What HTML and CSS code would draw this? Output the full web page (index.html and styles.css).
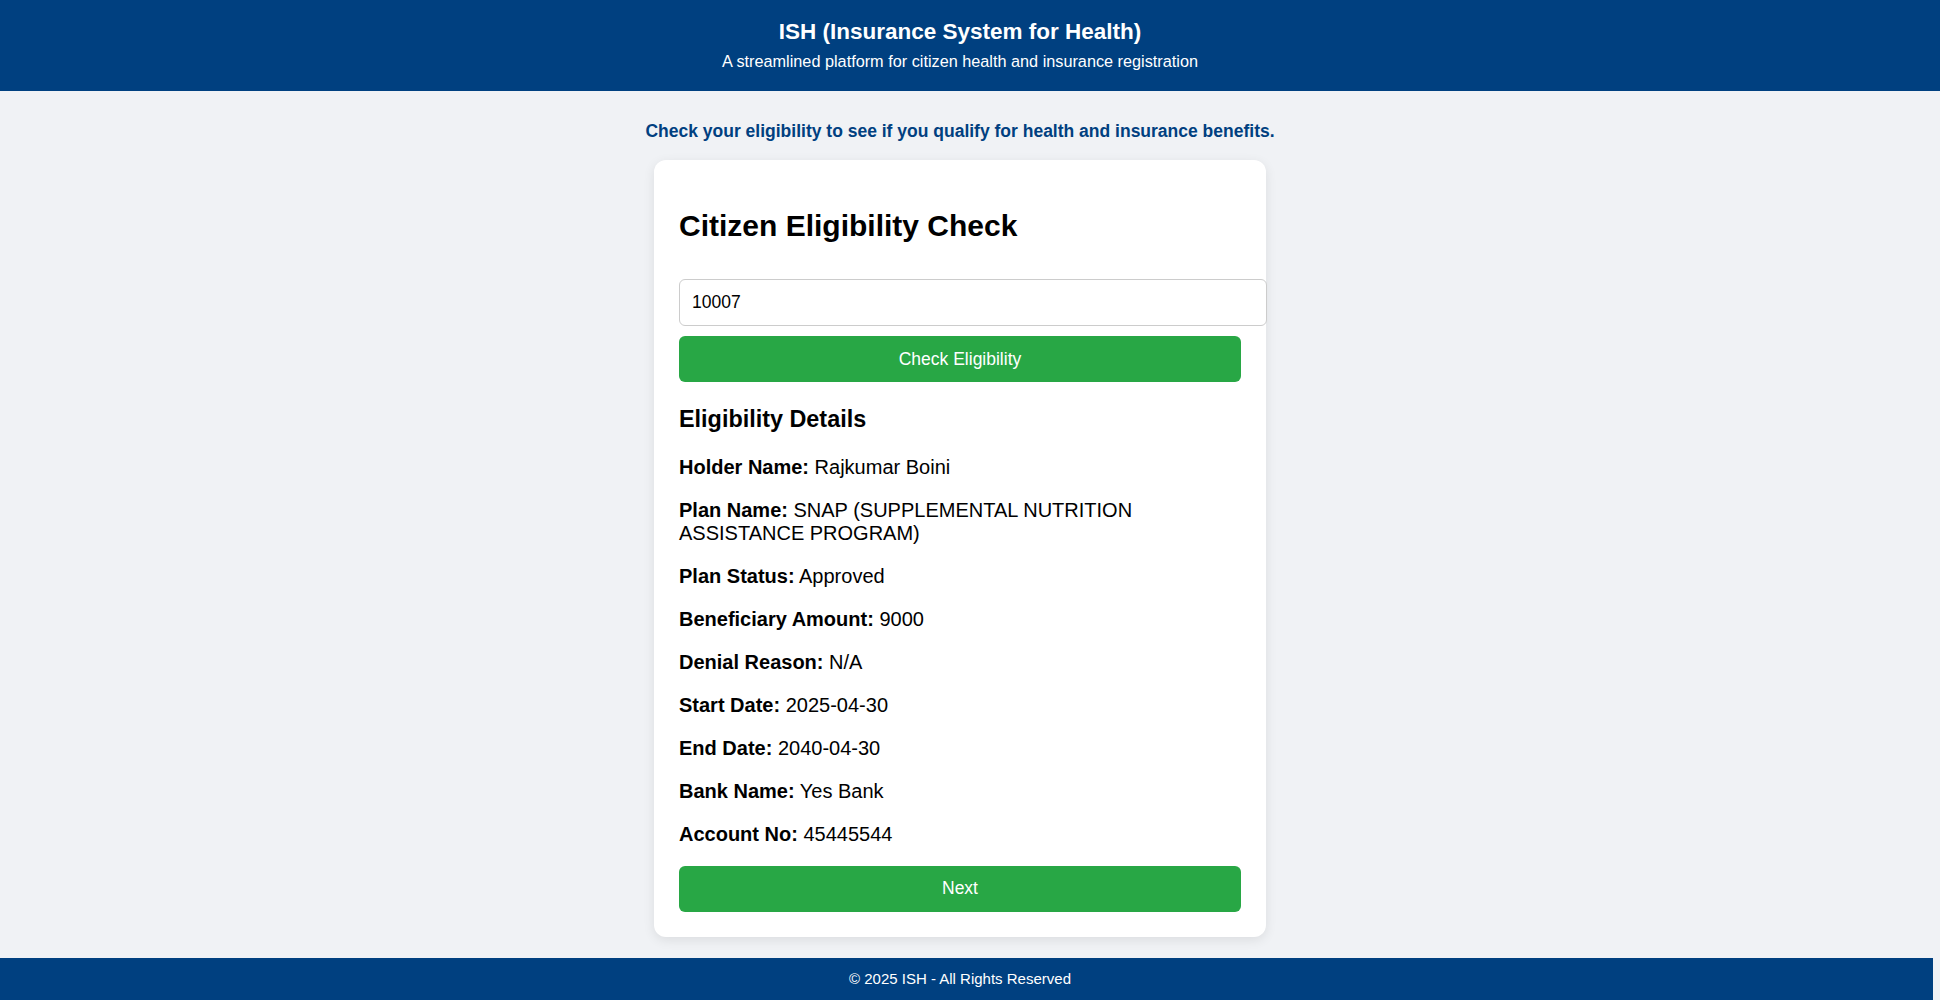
FILE: index.html
```html
<!DOCTYPE html>
<html lang="en">
<head>
<meta charset="UTF-8">
<title>ISH - Citizen Eligibility Check</title>
<link rel="stylesheet" href="styles.css">
</head>
<body>
<header class="site-header">
  <h1 class="site-title">ISH (Insurance System for Health)</h1>
  <p class="site-subtitle">A streamlined platform for citizen health and insurance registration</p>
</header>
<main class="page">
  <p class="tagline">Check your eligibility to see if you qualify for health and insurance benefits.</p>
  <section class="card">
    <h2 class="card-title">Citizen Eligibility Check</h2>
    <input class="case-input" type="text" value="10007">
    <button class="btn" type="button">Check Eligibility</button>
    <h3 class="details-title">Eligibility Details</h3>
    <p class="detail"><strong>Holder Name:</strong> Rajkumar Boini</p>
    <p class="detail"><strong>Plan Name:</strong> SNAP (SUPPLEMENTAL NUTRITION ASSISTANCE PROGRAM)</p>
    <p class="detail"><strong>Plan Status:</strong> Approved</p>
    <p class="detail"><strong>Beneficiary Amount:</strong> 9000</p>
    <p class="detail"><strong>Denial Reason:</strong> N/A</p>
    <p class="detail"><strong>Start Date:</strong> 2025-04-30</p>
    <p class="detail"><strong>End Date:</strong> 2040-04-30</p>
    <p class="detail"><strong>Bank Name:</strong> Yes Bank</p>
    <p class="detail"><strong>Account No:</strong> 45445544</p>
    <button class="btn btn-next" type="button">Next</button>
  </section>
</main>
<footer class="site-footer">© 2025 ISH - All Rights Reserved</footer>
</body>
</html>
```
FILE: styles.css
```css
* {
  box-sizing: content-box;
}

html, body {
  margin: 0;
  padding: 0;
}

body {
  font-family: "Liberation Sans", Arial, sans-serif;
  background: #f0f2f5;
  color: #000;
  font-size: 20px;
  overflow: hidden;
}

.site-header {
  background: #004080;
  color: #fff;
  text-align: center;
  padding: 18.5px 20px 20.5px 0;
  display: flex;
  flex-direction: column;
  gap: 7px;
}

.site-title {
  margin: 0;
  font-size: 22.5px;
  line-height: 26px;
  font-weight: bold;
}

.site-subtitle {
  margin: 0;
  font-size: 16.25px;
  line-height: 19px;
}

.page {
  display: flex;
  flex-direction: column;
  align-items: center;
  padding: 29.6px 20px 21px 0;
}

.tagline {
  margin: 0 0 19.4px;
  color: #004080;
  font-size: 17.5px;
  line-height: 20px;
  font-weight: bold;
}

.card {
  width: 562px;
  padding: 25px;
  background: #fff;
  border-radius: 12px;
  box-shadow: 0 3px 12px rgba(0, 0, 0, 0.09);
}

.card-title {
  margin: 24px 0 35.5px;
  font-size: 30px;
  line-height: 34.5px;
  font-weight: bold;
}

.case-input {
  display: block;
  width: 100%;
  margin: 0 0 10.6px;
  padding: 12.3px 12px;
  border: 1px solid #ccc;
  border-radius: 6px;
  font-family: "Liberation Sans", Arial, sans-serif;
  font-size: 17.5px;
  line-height: 20.1px;
  color: #000;
  background: #fff;
  outline: none;
}

.btn {
  display: block;
  width: 100%;
  height: 46px;
  padding: 0;
  border: none;
  border-radius: 6px;
  background: #28a745;
  color: #fff;
  font-family: "Liberation Sans", Arial, sans-serif;
  font-size: 17.5px;
  cursor: pointer;
}

.details-title {
  margin: 23.4px 0;
  font-size: 23.4px;
  line-height: 26.9px;
  font-weight: bold;
}

.detail {
  margin: 20px 0;
  font-size: 20px;
  line-height: 23px;
}

.btn-next {
  margin: 0;
}

.site-footer {
  background: #004080;
  color: #fff;
  text-align: center;
  font-size: 15px;
  line-height: 17px;
  padding: 12.5px 13px 12.5px 0;
  margin-right: 7px;
}
```
